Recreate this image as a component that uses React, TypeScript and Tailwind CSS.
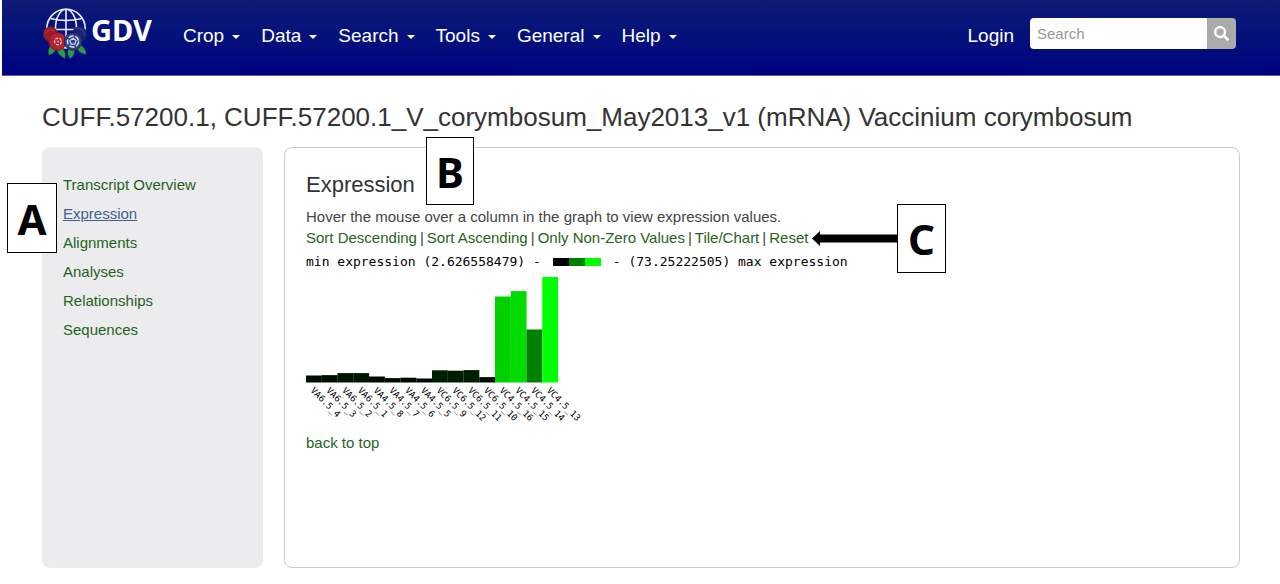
import { FaSearch } from 'react-icons/fa';

const menus = ['Crop', 'Data', 'Search', 'Tools', 'General', 'Help'];
const sections = ['Transcript Overview', 'Expression', 'Alignments', 'Analyses', 'Relationships', 'Sequences'];
const actions = ['Sort Descending', 'Sort Ascending', 'Only Non-Zero Values', 'Tile/Chart', 'Reset'];

const samples = [
  { name: 'VA6.5_4', height: 7, color: '#000f00' },
  { name: 'VA6.5_3', height: 7.4, color: '#001000' },
  { name: 'VA6.5_2', height: 9.4, color: '#001600' },
  { name: 'VA6.5_1', height: 9.4, color: '#001600' },
  { name: 'VA4.5_8', height: 6, color: '#000c00' },
  { name: 'VA4.5_7', height: 4.4, color: '#000a00' },
  { name: 'VA4.5_6', height: 4.8, color: '#000a00' },
  { name: 'VA4.5_5', height: 4, color: '#000900' },
  { name: 'VC6.5_9', height: 12.2, color: '#001f00' },
  { name: 'VC6.5_12', height: 11.8, color: '#001d00' },
  { name: 'VC6.5_11', height: 12.4, color: '#001f00' },
  { name: 'VC6.5_10', height: 5.4, color: '#000d00' },
  { name: 'VC4.5_16', height: 86, color: '#00d000' },
  { name: 'VC4.5_15', height: 91.4, color: '#00dc00' },
  { name: 'VC4.5_14', height: 53, color: '#008000' },
  { name: 'VC4.5_13', height: 105.5, color: '#00ff00' },
];

function Logo() {
  return (
    <svg className="h-[52px] w-[46px] shrink-0" viewBox="0 0 46 52" fill="none" aria-hidden="true">
      <g stroke="#e9ecfa" strokeWidth="1.6">
        <circle cx="23" cy="21.5" r="19.2" />
        <ellipse cx="23" cy="21.5" rx="10.5" ry="19.2" />
        <path d="M23 2.3V40M7.5 11.5Q23 15.5 38.500 11.5M3.8 22.500h38.4" />
      </g>
      <g fill="#2c9a4b" stroke="#14613a" strokeWidth="0.6">
        <path d="M8 38c-3 4-3 7-2 10 4-1 7-4 7-8z" />
        <path d="M14 41c0 5 3 8 8 10.500 1-4 0-8-3-11z" />
        <path d="M26 41c-2 4-1 7 1 10.500 4-2 5-7 4-11z" />
        <path d="M34 40c1 5 4 6 9 7.500 0-5-3-8-6-10z" />
      </g>
      <circle cx="7.5" cy="27" r="7.4" fill="#961c2a" />
      <path d="M3 27a5 5 0 0 1 8-3" stroke="#b84250" />
      <circle cx="36.5" cy="27" r="7.6" fill="#172475" />
      <path d="M34 21.5a6 6 0 0 1 7 7" stroke="#43518f" />
      <circle cx="14.5" cy="34.500" r="8.8" fill="#b32230" stroke="#7c1930" strokeWidth="0.8" />
      <circle cx="15" cy="34.500" r="3.4" stroke="#f3ccd0" strokeWidth="1.2" strokeDasharray="3 1.27" />
      <circle cx="15" cy="34.500" r="0.9" fill="#e9a0a6" />
      <circle cx="30" cy="34.500" r="8.8" fill="#2f4180" stroke="#16225c" strokeWidth="0.8" />
      <circle cx="30" cy="34.500" r="5.6" stroke="#dfe4f4" strokeWidth="1.5" strokeDasharray="5.2 1.83" />
      <path d="M30 31.200l3.100 2.300-1.200 3.700h-3.800l-1.200-3.700z" stroke="#cdd5ec" strokeWidth="1.2" />
    </svg>
  );
}

function Header() {
  return (
    <header className="ml-[2px] flex h-[76px] border-b border-[#5c5cab] bg-linear-to-b from-[#0d1a76] to-[#000080] pr-[44px] pl-[41px] font-['Liberation_Sans',Arial,sans-serif] text-[19px] text-white">
      <a href="#home" className="mt-[7px] flex h-[52px] w-[112px] gap-[2px]" aria-label="GDV home">
        <Logo />
        <span className="pt-[4px] font-['Noto_Sans',sans-serif] text-[29px] leading-[38px] font-bold">GDV</span>
      </a>
      <nav className="ml-[28px] flex h-[70px] items-center gap-[21px]">
        {menus.map((m) => (
          <button key={m} type="button" className="flex items-center gap-2">
            {m}
            <svg className="mt-[3px] h-1 w-2" viewBox="0 0 8 4" fill="currentColor" aria-hidden="true">
              <path d="M0 0h8L4 4z" />
            </svg>
          </button>
        ))}
      </nav>
      <a href="#login" className="ml-auto flex h-[70px] items-center">Login</a>
      <form className="mt-[18px] ml-4 flex h-[31px] overflow-hidden rounded-[4px]">
        <input type="text" aria-label="Search" placeholder="Search" className="w-[177px] bg-white px-[7px] text-[15px] text-[#555] outline-none placeholder:text-[#999]" />
        <button type="button" aria-label="Submit search" className="flex w-[29px] items-center justify-center bg-[#aaa]">
          <FaSearch className="size-[15px]" />
        </button>
      </form>
    </header>
  );
}

function ExpressionChart() {
  const base = 105.5;
  return (
    <svg className="mt-[5px] block h-[150px] w-[290px]" viewBox="0 0 290 150" role="img" aria-label="Expression by sample">
      {samples.map((s, i) => (
        <g key={s.name}>
          <rect x={i * 15.75} y={base - s.height} width="15.85" height={s.height} fill={s.color} />
          <text
            transform={`translate(${i * 15.75 + 4} 114) rotate(45)`}
            className="font-['DejaVu_Sans_Mono',monospace] text-[9px]"
            fill="#000"
          >
            {s.name}
          </text>
        </g>
      ))}
    </svg>
  );
}

function Marker({ letter, className }: { letter: string; className: string }) {
  return (
    <div className={`absolute flex items-center justify-center border border-black bg-white font-['Noto_Sans',sans-serif] text-[42px] font-bold text-black ${className}`}>
      {letter}
    </div>
  );
}

export default function App() {
  return (
    <div className="relative min-h-screen bg-white font-['Liberation_Sans',Arial,sans-serif] text-[15px] leading-[21px] text-[#444]">
      <Header />
      <main className="pr-10 pb-4 pl-[42px]">
        <h1 className="pt-[25px] text-[26px] leading-[32px] whitespace-nowrap text-[#333]">
          CUFF.57200.1, CUFF.57200.1_V_corymbosum_May2013_v1 (mRNA) Vaccinium corymbosum
        </h1>
        <div className="mt-[14px] flex gap-[21px]">
          <aside className="w-[221px] shrink-0 rounded-[8px] bg-[#ececee] px-[21px] pt-[27px]">
            <ul className="flex flex-col gap-[8px]">
              {sections.map((s) => (
                <li key={s} className="h-[21px]">
                  <a href={`#${s}`} className={s === 'Expression' ? 'text-[#41618d] underline' : 'text-[#1f6420]'}>{s}</a>
                </li>
              ))}
            </ul>
          </aside>
          <section className="min-h-[421px] min-w-0 flex-1 rounded-[8px] border border-[#ccc] pt-[23px] pl-[21px]">
            <h2 className="text-[22px] leading-[28px] text-[#333]">Expression</h2>
            <p className="mt-[7px]">Hover the mouse over a column in the graph to view expression values.</p>
            <div className="flex gap-[3px] text-[#1f6420]">
              {actions.map((a, i) => (
                <span key={a} className="flex gap-[3px]">
                  {i > 0 && <span className="text-[#444]">|</span>}
                  <button type="button">{a}</button>
                </span>
              ))}
            </div>
            <div className="mt-[4px] flex items-center gap-[12px] font-['DejaVu_Sans_Mono',monospace] text-[13px] leading-[20px] whitespace-nowrap text-black">
              <span>min expression (2.626558479) -</span>
              <span className="flex h-2">
                <span className="w-4 bg-black" />
                <span className="w-4 bg-[#008000]" />
                <span className="w-4 bg-[#00ff00]" />
              </span>
              <span>- (73.25222505) max expression</span>
            </div>
            <ExpressionChart />
            <a href="#top" className="mt-[5px] block text-[#1f6420]">back to top</a>
          </section>
        </div>
      </main>
      <Marker letter="A" className="top-[183px] left-[7px] h-[70px] w-[50px]" />
      <Marker letter="B" className="top-[137px] left-[426px] h-[68px] w-[48px]" />
      <svg className="absolute top-[231px] left-[812px] h-4 w-[86px]" viewBox="0 0 86 16" aria-hidden="true">
        <path d="M0 7.5L8 0v3.5h78v8H8V15z" />
      </svg>
      <Marker letter="C" className="top-[204px] left-[897px] h-[69px] w-[49px]" />
    </div>
  );
}
